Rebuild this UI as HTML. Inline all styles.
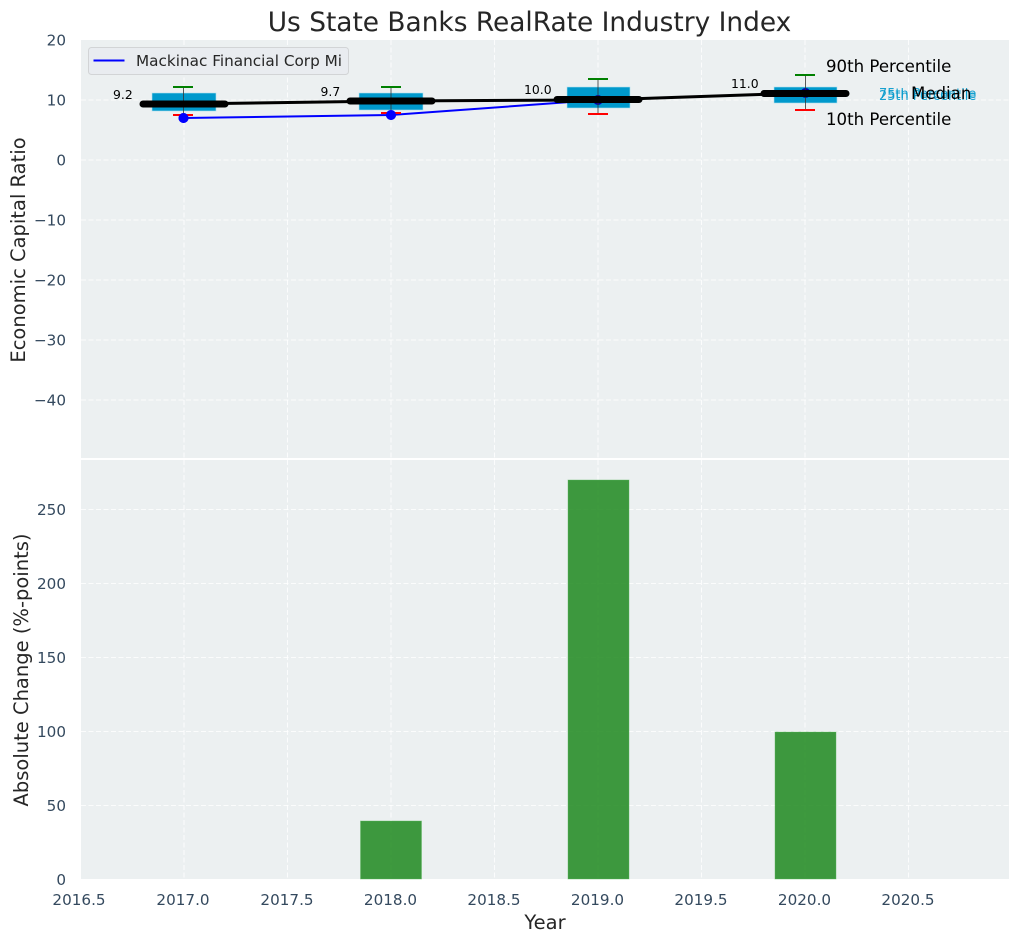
<!DOCTYPE html>
<html><head><meta charset="utf-8"><title>Us State Banks RealRate Industry Index</title>
<style>
html,body{margin:0;padding:0;background:#fff}
svg{display:block}
text{font-family:"DejaVu Sans","Liberation Sans",sans-serif}
.t{font-size:15.2px;fill:#34495e}
.l{font-size:19.500px;fill:#262626}
.g{stroke:#fff;stroke-opacity:.8;stroke-width:1.1;stroke-dasharray:5 2.5;fill:none}
.a{font-size:12.400px;fill:#000}
.p{font-size:16.600px;fill:#000}
</style></head><body>
<svg width="1019" height="942" viewBox="0 0 1019 942" xmlns="http://www.w3.org/2000/svg">
<rect width="1019" height="942" fill="#fff"/>
<rect x="81" y="40" width="928" height="418" fill="#ecf0f1"/>
<rect x="81" y="460" width="928" height="419" fill="#ecf0f1"/>
<g class="g">
<path d="M184 40V458M287.500 40V458M391 40V458M494.500 40V458M598 40V458M701.500 40V458M805 40V458M908.500 40V458"/>
<path d="M81 100H1009M81 160H1009M81 220H1009M81 280H1009M81 340H1009M81 400H1009"/>
<path d="M184 460V879M287.500 460V879M391 460V879M494.500 460V879M598 460V879M701.500 460V879M805 460V879M908.500 460V879"/>
<path d="M81 805.500H1009M81 731.500H1009M81 657.500H1009M81 583.500H1009M81 509.500H1009"/>
</g>
<!-- blue -->
<path d="M183.500 118L391 115L598 100L805.500 93" stroke="#0000ff" stroke-width="2" fill="none"/>
<g fill="#0000ff">
<circle cx="183.500" cy="118" r="5"/><circle cx="391" cy="115" r="5"/><circle cx="598" cy="100" r="5"/><circle cx="805.500" cy="93" r="5"/>
</g>
<!-- top panel boxes -->
<g fill="#0099cc" stroke="#aee0ee" stroke-width=".6">
<rect x="152" y="93" width="64" height="18"/>
<rect x="359" y="93" width="64" height="17"/>
<rect x="567" y="87" width="63" height="21"/>
<rect x="774" y="87" width="63" height="16"/>
</g>
<g fill="#0000b0">
<circle cx="598" cy="100" r="5"/><circle cx="805.500" cy="93" r="5"/>
</g>
<path d="M567 102.300L598 100L630 97.600" stroke="#0000b0" stroke-width="2" fill="none"/>
<g stroke="#333" stroke-opacity=".8" stroke-width="1" fill="none">
<path d="M183.500 87V115M391 87V113M598 79V114M805.500 75V110"/>
</g>
<g stroke="#008000" stroke-width="2" fill="none">
<path d="M173 87H193M381 87H401M588 79H608M795 75H815"/>
</g>
<g stroke="#f00" stroke-width="2" fill="none">
<path d="M173 115H193M381 113H401M588 114H608M795 110H815"/>
</g>
<circle cx="183.500" cy="118" r="5" fill="#0000ff"/><circle cx="391" cy="115" r="5" fill="#0000ff"/>
<!-- black -->
<path d="M183.500 104L391 101L598 100L805.500 93" stroke="#000" stroke-width="3" fill="none"/>
<g stroke="#000" stroke-width="7" stroke-linecap="round" fill="none">
<path d="M143 104H225M350 101H432M557 99.500H639M764 93.500H846"/>
</g>
<!-- annotations -->
<text class="a" x="113" y="99">9.2</text>
<text class="a" x="320.500" y="96">9.7</text>
<text class="a" x="524" y="94">10.0</text>
<text class="a" x="731" y="88">11.0</text>
<text class="p" x="826" y="72">90th Percentile</text>
<text class="p" x="826" y="125">10th Percentile</text>
<text x="879" y="98" style="font-size:12.900px;fill:#0099cc;opacity:.9">75th Percentile</text>
<text x="879" y="100" style="font-size:12.900px;fill:#0099cc;opacity:.9">25th Percentile</text>
<text class="p" x="911" y="99">Median</text>
<!-- legend -->
<rect x="88.500" y="47.500" width="260" height="27" rx="3" fill="#e9ecf0" stroke="#d2d4d6"/>
<path d="M93.500 60.500H124.500" stroke="#0000ff" stroke-width="2"/>
<text x="136" y="66" style="font-size:15.250px;fill:#262626">Mackinac Financial Corp Mi</text>
<!-- bars -->
<g fill="#228b22" fill-opacity=".87" stroke="#5cb85c" stroke-opacity=".5" stroke-width=".8">
<rect x="360.500" y="821" width="61" height="58"/>
<rect x="568" y="480" width="61" height="399"/>
<rect x="775" y="732" width="61" height="147"/>
</g>
<!-- labels -->
<text x="529.500" y="31" text-anchor="middle" style="font-size:26.400px;fill:#262626">Us State Banks RealRate Industry Index</text>
<text class="l" x="545" y="929" text-anchor="middle">Year</text>
<text class="l" transform="translate(25 250) rotate(-90)" text-anchor="middle">Economic Capital Ratio</text>
<text class="l" transform="translate(28 670) rotate(-90)" text-anchor="middle">Absolute Change (%-points)</text>
<g class="t" text-anchor="end">
<text x="66" y="45.500">20</text>
<text x="66" y="105.500">10</text>
<text x="66" y="165.500">0</text>
<text x="66" y="225.500">−10</text>
<text x="66" y="285.500">−20</text>
<text x="66" y="345.500">−30</text>
<text x="66" y="405.500">−40</text>
<text x="66" y="515">250</text>
<text x="66" y="589">200</text>
<text x="66" y="663">150</text>
<text x="66" y="737">100</text>
<text x="66" y="811">50</text>
<text x="66" y="885">0</text>
</g>
<g class="t" text-anchor="middle">
<text x="79" y="905">2016.5</text>
<text x="183" y="905">2017.0</text>
<text x="287" y="905">2017.5</text>
<text x="390.500" y="905">2018.0</text>
<text x="494" y="905">2018.5</text>
<text x="597.500" y="905">2019.0</text>
<text x="701" y="905">2019.5</text>
<text x="804.500" y="905">2020.0</text>
<text x="908" y="905">2020.5</text>
</g>
</svg>
</body></html>
